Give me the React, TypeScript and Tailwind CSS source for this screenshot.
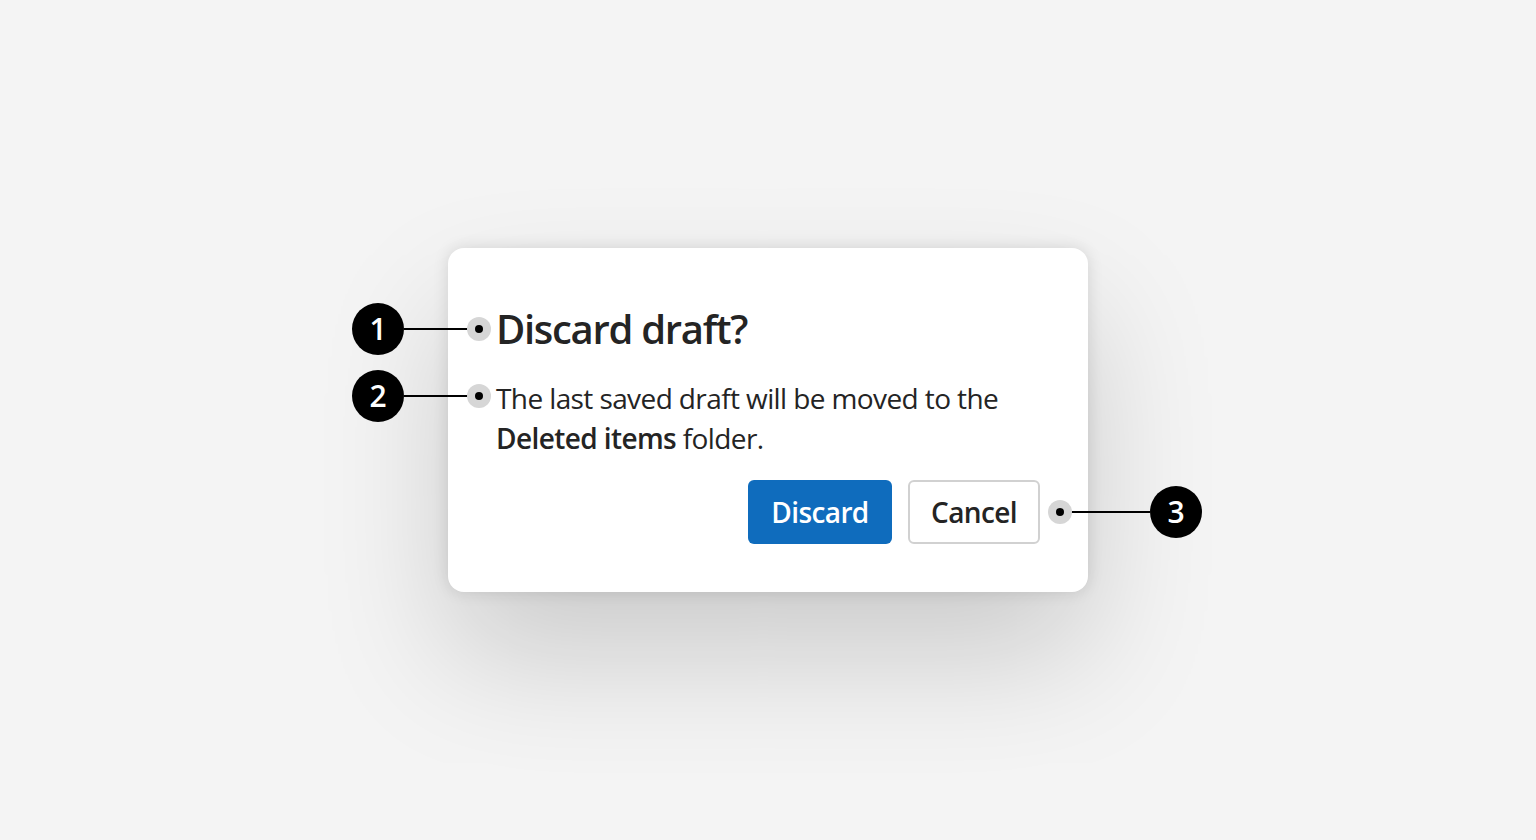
import React from "react";

const font = { fontFamily: '"Open Sans", "Noto Sans", sans-serif' };

function Badge({ n }: { n: number }) {
  return (
    <div className="w-[52px] h-[52px] shrink-0 rounded-full bg-black text-white flex items-center justify-center text-[30px] font-semibold leading-none">
      {n}
    </div>
  );
}

function Pin() {
  return (
    <div className="relative w-6 h-6 shrink-0 rounded-full bg-[#d6d6d6] flex items-center justify-center">
      <div className="w-2 h-2 rounded-full bg-black" />
    </div>
  );
}

// callout pointing right (badge on the left)
function CalloutLeft({ n }: { n: number }) {
  return (
    <div className="absolute right-[calc(100%+5px)] top-0 h-full flex items-center">
      <Badge n={n} />
      <div className="w-[75px] h-[2px] bg-black -mr-3" />
      <Pin />
    </div>
  );
}

export default function App() {
  return (
    <div
      className="w-full h-[840px] bg-[#f4f4f4] flex items-start justify-center pt-[248px] text-[#242424]"
      style={font}
    >
      <div className="w-[640px] bg-white rounded-2xl p-12 shadow-[0_0_16px_rgba(0,0,0,0.12),0_64px_128px_rgba(0,0,0,0.17)]">
        <div className="relative mt-[5px]">
          <h2 className="text-[40px] leading-[56px] font-semibold tracking-[-1.3px]">Discard draft?</h2>
          <CalloutLeft n={1} />
        </div>
        <div className="relative mt-[21px]">
          <p className="text-[28px] leading-[40px] tracking-[-0.6px]">
            The last saved draft will be moved to the <span className="font-semibold">Deleted items</span> folder.
          </p>
          <div className="absolute right-[calc(100%+5px)] top-0 h-10 flex items-center -mt-[2px]">
            <Badge n={2} />
            <div className="w-[75px] h-[2px] bg-black -mr-3" />
            <Pin />
          </div>
        </div>
        <div className="mt-[22px] flex justify-end">
          <div className="relative flex gap-4">
            <button className="h-16 w-[144px] rounded-[6px] bg-[#0f6cbd] text-white text-[28px] font-semibold tracking-[-0.6px]">
              Discard
            </button>
            <button className="h-16 w-[132px] rounded-[6px] border-2 border-[#d1d1d1] bg-white text-[28px] font-semibold tracking-[-0.6px]">
              Cancel
            </button>
            <div className="absolute left-[calc(100%+8px)] top-0 h-full flex items-center">
              <Pin />
              <div className="w-[90px] h-[2px] bg-black -ml-3" />
              <Badge n={3} />
            </div>
          </div>
        </div>
      </div>
    </div>
  );
}
